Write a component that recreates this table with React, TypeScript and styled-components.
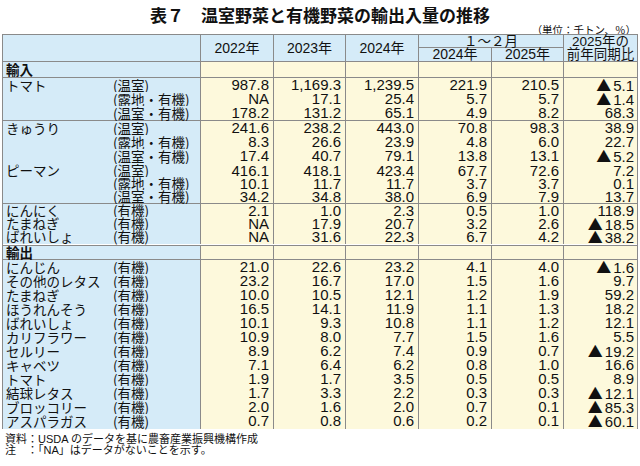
import React from 'react';
import styled, { createGlobalStyle } from 'styled-components';

const BLUE = '#d5ebf8';
const CREAM = '#fdf9dc';
const LINE = '#8a8a8a';
const COLS = '110px 88px 73px 72px 73px 73px 72px 73px';
const JP = '"Noto Sans CJK JP", sans-serif';
const MIX = '"Liberation Sans", "Noto Sans CJK JP", sans-serif';

const GlobalStyle = createGlobalStyle`
  html, body { margin: 0; padding: 0; background: #fff; }
  body { font-family: ${MIX}; color: #111; }
`;

const Page = styled.div`
  width: 640px;
  height: 466px;
  padding: 0 2px;
  box-sizing: border-box;
  display: flex;
  flex-direction: column;
`;

const Title = styled.h1`
  margin: 0;
  padding-top: 3px;
  height: 27px;
  box-sizing: border-box;
  line-height: 24px;
  font-size: 17px;
  font-weight: 700;
  text-align: center;
  font-family: ${JP};
  color: #111;
`;

const Unit = styled.div`
  height: 7px;
  line-height: 7px;
  font-size: 10.5px;
  text-align: right;
  padding-right: 2px;
  font-family: ${MIX};
`;

const Table = styled.div`
  width: 636px;
  border: 1px solid ${LINE};
  box-sizing: border-box;
  display: flex;
  flex-direction: column;
`;

const HeaderGrid = styled.div`
  display: grid;
  grid-template-columns: ${COLS};
  grid-template-rows: 13px 13px;
  background: ${BLUE};
  border-bottom: 1px solid ${LINE};
`;

const HeadCell = styled.div<{ $col: string; $row: string; $right?: boolean; $bottom?: boolean }>`
  grid-column: ${(p) => p.$col};
  grid-row: ${(p) => p.$row};
  border-right: ${(p) => (p.$right ? `1px solid ${LINE}` : 'none')};
  border-bottom: ${(p) => (p.$bottom ? `1px solid ${LINE}` : 'none')};
  display: flex;
  flex-direction: column;
  align-items: center;
  justify-content: center;
  font-size: 14px;
  line-height: 13px;
  white-space: nowrap;
  font-family: ${MIX};
`;

const HeadSmall = styled.span`
  font-size: 13.5px;
  line-height: 13px;
`;

const Row = styled.div<{ $h: number; $end?: 'single' | 'double' }>`
  display: grid;
  grid-template-columns: ${COLS};
  height: ${(p) => p.$h}px;
  border-bottom: ${(p) =>
    p.$end === 'single' ? `1px solid ${LINE}` : p.$end === 'double' ? `3px double ${LINE}` : 'none'};
`;

const NameCell = styled.div<{ $h: number }>`
  background: ${BLUE};
  padding-left: 3px;
  font-family: ${JP};
  font-size: 13.5px;
  line-height: ${(p) => p.$h}px;
  white-space: nowrap;
`;

const SubCell = styled.div<{ $h: number }>`
  background: ${BLUE};
  border-right: 1px solid ${LINE};
  font-family: ${JP};
  font-size: 13.5px;
  line-height: ${(p) => p.$h}px;
  white-space: nowrap;
`;

const SectionCell = styled.div<{ $h: number }>`
  grid-column: 1 / 3;
  background: ${BLUE};
  border-right: 1px solid ${LINE};
  padding-left: 3px;
  font-family: ${JP};
  font-weight: 700;
  font-size: 13.5px;
  line-height: ${(p) => p.$h}px;
`;

const NumCell = styled.div<{ $h: number; $last?: boolean }>`
  background: ${CREAM};
  border-right: ${(p) => (p.$last ? 'none' : `1px solid ${LINE}`)};
  text-align: right;
  padding-right: ${(p) => (p.$last ? 3 : 4)}px;
  font-family: ${MIX};
  font-size: 15px;
  line-height: ${(p) => p.$h}px;
  white-space: nowrap;
`;

const Tri = styled.span`
  font-family: ${JP};
  font-size: 15px;
  margin-right: 2px;
`;

const Notes = styled.div`
  margin-top: 5px;
  padding-left: 3px;
  font-family: ${MIX};
  font-size: 11px;
  line-height: 11px;
`;

const NoteLine = styled.div`
  white-space: pre;
`;

type DataRow = { name?: string; sub: string; v: string[] };
type Group = { rows: DataRow[]; h: number; end?: 'single' | 'double' };

const importGroups: Group[] = [
  {
    h: 14,
    end: 'single',
    rows: [
      { name: 'トマト', sub: '(温室)', v: ['987.8', '1,169.3', '1,239.5', '221.9', '210.5', '-5.1'] },
      { sub: '(露地・有機)', v: ['NA', '17.1', '25.4', '5.7', '5.7', '-1.4'] },
      { sub: '(温室・有機)', v: ['178.2', '131.2', '65.1', '4.9', '8.2', '68.3'] },
    ],
  },
  {
    h: 14,
    end: 'single',
    rows: [
      { name: 'きゅうり', sub: '(温室)', v: ['241.6', '238.2', '443.0', '70.8', '98.3', '38.9'] },
      { sub: '(露地・有機)', v: ['8.3', '26.6', '23.9', '4.8', '6.0', '22.7'] },
      { sub: '(温室・有機)', v: ['17.4', '40.7', '79.1', '13.8', '13.1', '-5.2'] },
    ],
  },
  {
    h: 13,
    end: 'single',
    rows: [
      { name: 'ピーマン', sub: '(温室)', v: ['416.1', '418.1', '423.4', '67.7', '72.6', '7.2'] },
      { sub: '(露地・有機)', v: ['10.1', '11.7', '11.7', '3.7', '3.7', '0.1'] },
      { sub: '(温室・有機)', v: ['34.2', '34.8', '38.0', '6.9', '7.9', '13.7'] },
    ],
  },
  {
    h: 13,
    end: 'double',
    rows: [
      { name: 'にんにく', sub: '(有機)', v: ['2.1', '1.0', '2.3', '0.5', '1.0', '118.9'] },
      { name: 'たまねぎ', sub: '(有機)', v: ['NA', '17.9', '20.7', '3.2', '2.6', '-18.5'] },
      { name: 'ばれいしょ', sub: '(有機)', v: ['NA', '31.6', '22.3', '6.7', '4.2', '-38.2'] },
    ],
  },
];

const exportRows: DataRow[] = [
  { name: 'にんじん', sub: '(有機)', v: ['21.0', '22.6', '23.2', '4.1', '4.0', '-1.6'] },
  { name: 'その他のレタス', sub: '(有機)', v: ['23.2', '16.7', '17.0', '1.5', '1.6', '9.7'] },
  { name: 'たまねぎ', sub: '(有機)', v: ['10.0', '10.5', '12.1', '1.2', '1.9', '59.2'] },
  { name: 'ほうれんそう', sub: '(有機)', v: ['16.5', '14.1', '11.9', '1.1', '1.3', '18.2'] },
  { name: 'ばれいしょ', sub: '(有機)', v: ['10.1', '9.3', '10.8', '1.1', '1.2', '12.1'] },
  { name: 'カリフラワー', sub: '(有機)', v: ['10.9', '8.0', '7.7', '1.5', '1.6', '5.5'] },
  { name: 'セルリー', sub: '(有機)', v: ['8.9', '6.2', '7.4', '0.9', '0.7', '-19.2'] },
  { name: 'キャベツ', sub: '(有機)', v: ['7.1', '6.4', '6.2', '0.8', '1.0', '16.6'] },
  { name: 'トマト', sub: '(有機)', v: ['1.9', '1.7', '3.5', '0.5', '0.5', '8.9'] },
  { name: '結球レタス', sub: '(有機)', v: ['1.7', '3.3', '2.2', '0.3', '0.3', '-12.1'] },
  { name: 'ブロッコリー', sub: '(有機)', v: ['2.0', '1.6', '2.0', '0.7', '0.1', '-85.3'] },
  { name: 'アスパラガス', sub: '(有機)', v: ['0.7', '0.8', '0.6', '0.2', '0.1', '-60.1'] },
];

function Value({ v }: { v: string }) {
  if (v.startsWith('-')) {
    return (
      <>
        <Tri>▲</Tri>
        {v.slice(1)}
      </>
    );
  }
  return <>{v}</>;
}

function DataLine({ r, h, end }: { r: DataRow; h: number; end?: 'single' | 'double' }) {
  return (
    <Row $h={h} $end={end}>
      <NameCell $h={h}>{r.name ?? ''}</NameCell>
      <SubCell $h={h}>{r.sub}</SubCell>
      {r.v.map((v, i) => (
        <NumCell key={i} $h={h} $last={i === 5}>
          <Value v={v} />
        </NumCell>
      ))}
    </Row>
  );
}

function SectionLine({ label, h }: { label: string; h: number }) {
  return (
    <Row $h={h} $end="single">
      <SectionCell $h={h}>{label}</SectionCell>
      {[0, 1, 2, 3, 4, 5].map((i) => (
        <NumCell key={i} $h={h} $last={i === 5} />
      ))}
    </Row>
  );
}

export default function App() {
  const EXP_H = 14;
  return (
    <>
      <GlobalStyle />
      <Page>
        <Title>表７　温室野菜と有機野菜の輸出入量の推移</Title>
        <Unit>（単位：千トン、％）</Unit>
        <Table>
          <HeaderGrid>
            <HeadCell $col="1 / 3" $row="1 / 3" $right />
            <HeadCell $col="3" $row="1 / 3" $right>2022年</HeadCell>
            <HeadCell $col="4" $row="1 / 3" $right>2023年</HeadCell>
            <HeadCell $col="5" $row="1 / 3" $right>2024年</HeadCell>
            <HeadCell $col="6 / 8" $row="1" $right $bottom>
              <HeadSmall>１～２月</HeadSmall>
            </HeadCell>
            <HeadCell $col="6" $row="2" $right>2024年</HeadCell>
            <HeadCell $col="7" $row="2" $right>2025年</HeadCell>
            <HeadCell $col="8" $row="1 / 3">
              <HeadSmall>2025年の</HeadSmall>
              <HeadSmall>前年同期比</HeadSmall>
            </HeadCell>
          </HeaderGrid>
          <SectionLine label="輸入" h={15} />
          {importGroups.map((g, gi) =>
            g.rows.map((r, ri) => (
              <DataLine
                key={`${gi}-${ri}`}
                r={r}
                h={g.h}
                end={ri === g.rows.length - 1 ? g.end : undefined}
              />
            ))
          )}
          <SectionLine label="輸出" h={13} />
          {exportRows.map((r, i) => (
            <DataLine key={`e${i}`} r={r} h={EXP_H} />
          ))}
        </Table>
        <Notes>
          <NoteLine>資料：USDA のデータを基に農畜産業振興機構作成</NoteLine>
          <NoteLine>注　：「NA」はデータがないことを示す。</NoteLine>
        </Notes>
      </Page>
    </>
  );
}
